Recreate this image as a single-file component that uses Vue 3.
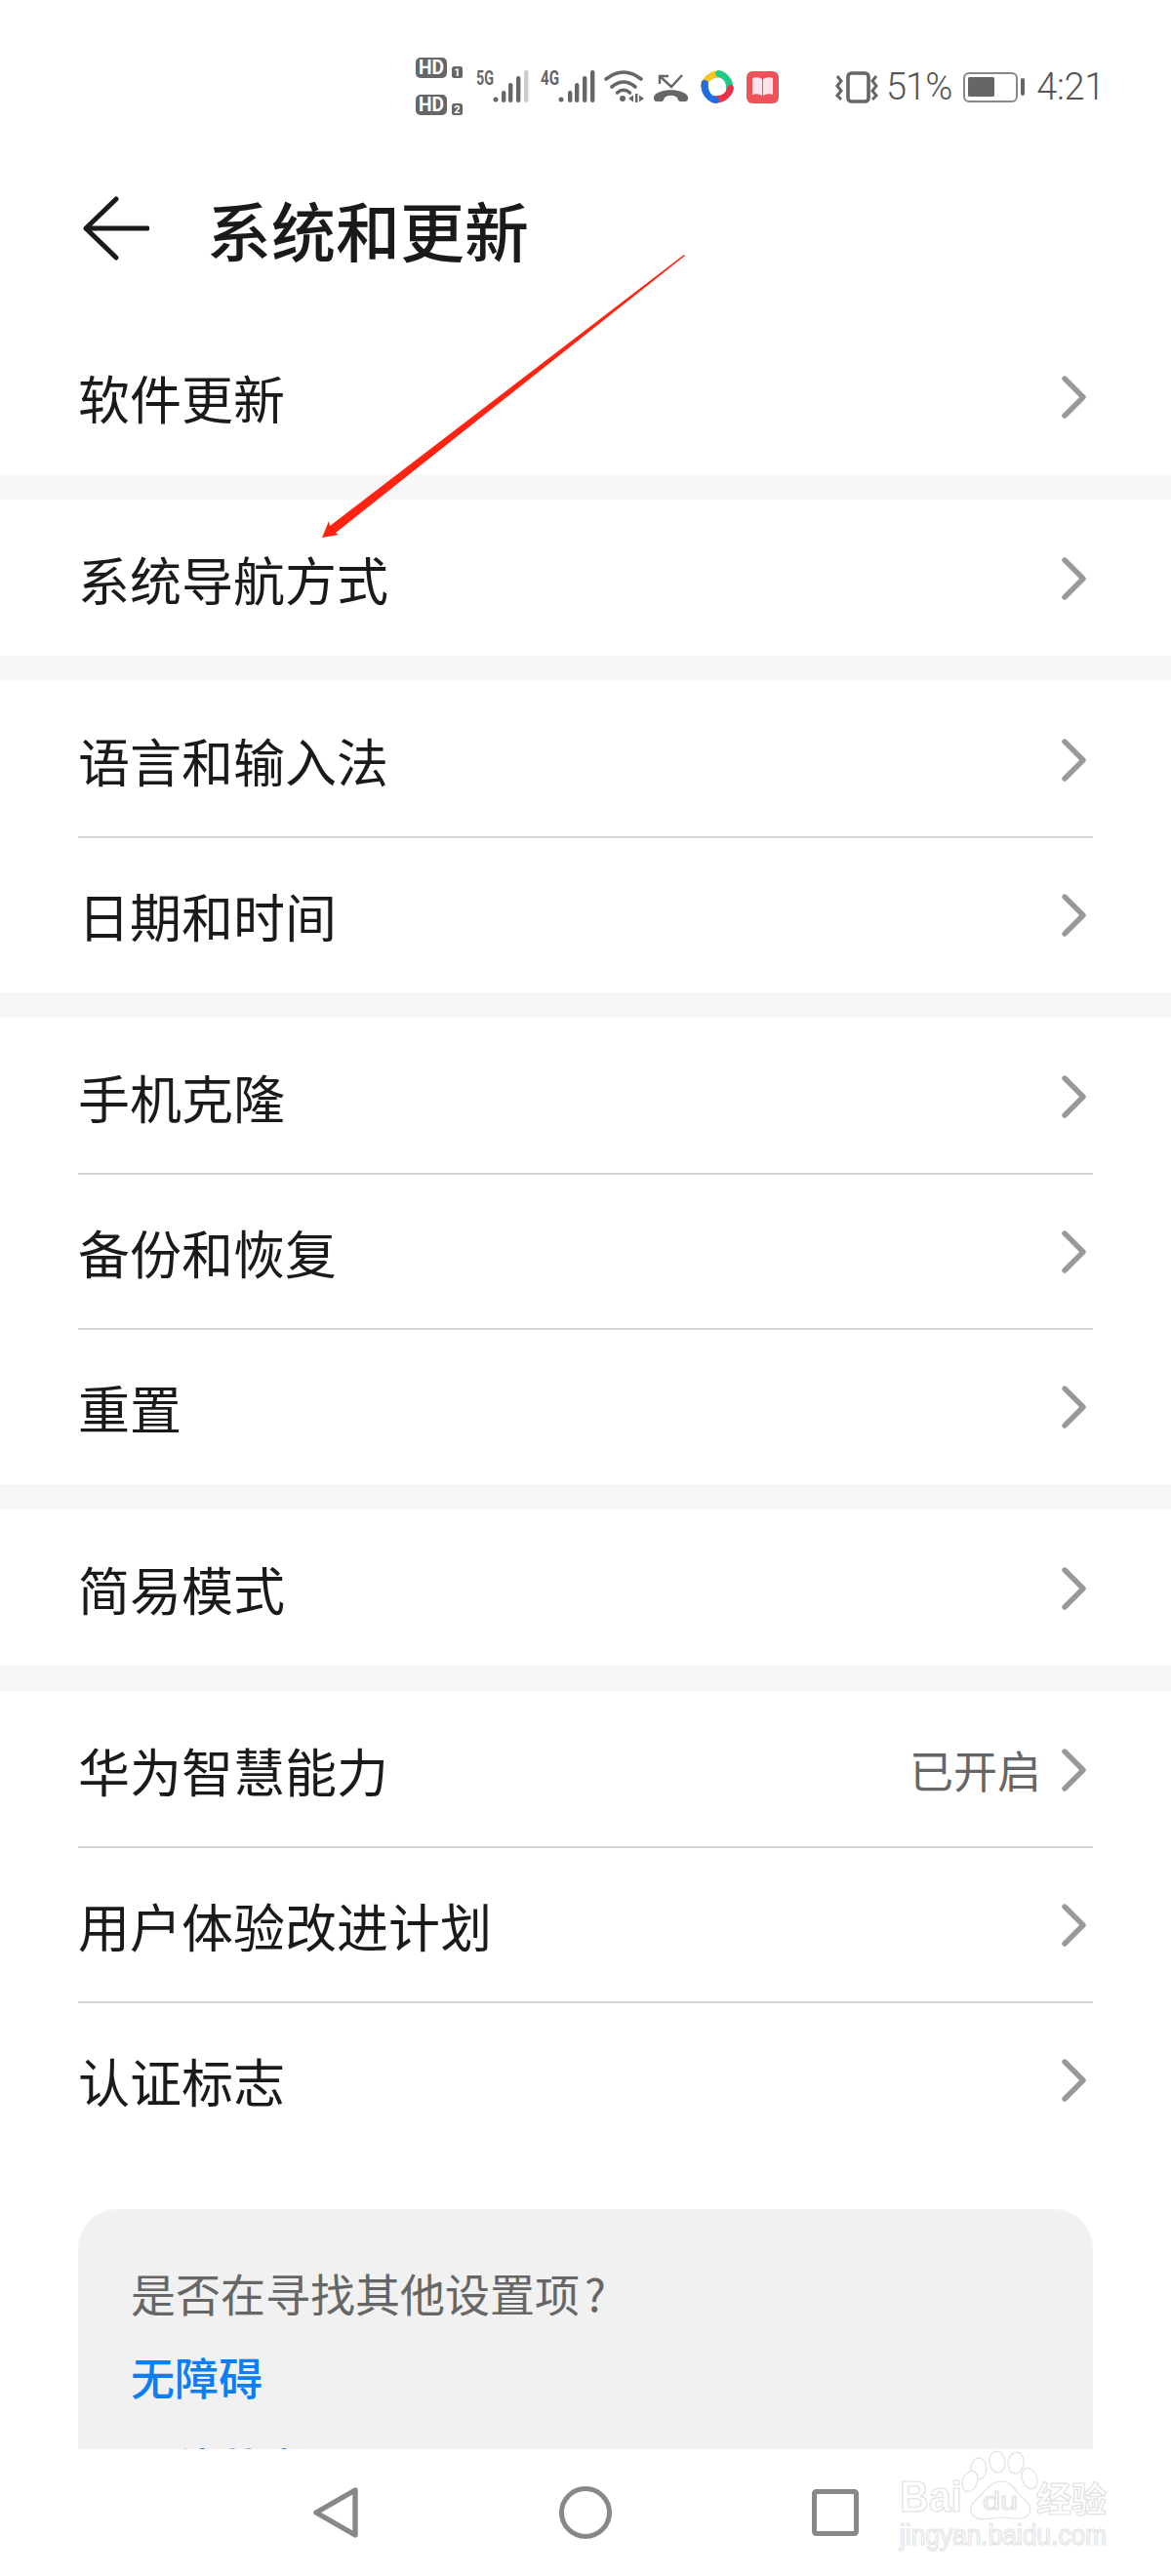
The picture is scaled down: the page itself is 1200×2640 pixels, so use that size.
<script setup>
const groups = [
  [{ label: '软件更新' }],
  [{ label: '系统导航方式' }],
  [{ label: '语言和输入法' }, { label: '日期和时间' }],
  [{ label: '手机克隆' }, { label: '备份和恢复' }, { label: '重置' }],
  [{ label: '简易模式' }],
  [{ label: '华为智慧能力', value: '已开启' }, { label: '用户体验改进计划' }, { label: '认证标志' }],
]

// one swoosh of the round app icon, turned four times
const swoosh = 'M1 17 C2 8 12 -1 24 2 C26 5 25 8 22 9 C15 8 9 11 8 17 C6 21 2 21 1 17 Z'
</script>

<template>
  <div class="page">
    <div class="screen">
      <div class="status">
        <svg class="ic hd" width="48" height="60" viewBox="0 0 48 60">
          <rect x="0" y="0" width="32" height="21" rx="5" fill="#666" />
          <text x="16" y="17" class="hd-t" text-anchor="middle" textLength="26" lengthAdjust="spacingAndGlyphs">HD</text>
          <rect x="37" y="9" width="11" height="12" rx="2.5" fill="#666" />
          <text x="42.5" y="19" class="hd-n" text-anchor="middle">1</text>
          <rect x="0" y="38" width="32" height="21" rx="5" fill="#666" />
          <text x="16" y="55" class="hd-t" text-anchor="middle" textLength="26" lengthAdjust="spacingAndGlyphs">HD</text>
          <rect x="37" y="47" width="11" height="12" rx="2.5" fill="#666" />
          <text x="42.5" y="57" class="hd-n" text-anchor="middle">2</text>
        </svg>
        <svg class="ic sig1" width="54" height="34" viewBox="0 0 54 34">
          <text x="0" y="15" class="net" textLength="18" lengthAdjust="spacingAndGlyphs">5G</text>
          <circle cx="20" cy="30" r="2.5" fill="#666" />
          <rect x="26" y="21" width="4.4" height="12" rx="2.2" fill="#666" />
          <rect x="33" y="13" width="4.4" height="20" rx="2.2" fill="#666" />
          <rect x="41" y="6" width="4.4" height="27" rx="2.2" fill="#666" />
          <rect x="49" y="0" width="4.4" height="33" rx="2.2" fill="#ccc" />
        </svg>
        <svg class="ic sig2" width="56" height="34" viewBox="0 0 56 34">
          <text x="0" y="15" class="net" textLength="19" lengthAdjust="spacingAndGlyphs">4G</text>
          <circle cx="21" cy="30" r="2.5" fill="#666" />
          <rect x="28" y="21" width="4.4" height="12" rx="2.2" fill="#666" />
          <rect x="35" y="13" width="4.4" height="20" rx="2.2" fill="#666" />
          <rect x="43" y="6" width="4.4" height="27" rx="2.2" fill="#666" />
          <rect x="51" y="0" width="4.4" height="33" rx="2.2" fill="#666" />
        </svg>
        <svg class="ic wifi" width="41" height="34" viewBox="0 0 41 34">
          <g fill="none" stroke="#666" stroke-width="3.6" stroke-linecap="round">
            <path d="M2 9 Q20 -5 38 9" />
            <path d="M8 17 Q20 7 32 17" />
            <path d="M13.5 23 Q20 17.5 26.5 23" />
          </g>
          <circle cx="19" cy="29" r="3" fill="#666" />
          <polygon points="25,29 30,25.5 30,32.5" fill="#666" />
          <rect x="32" y="24" width="2.5" height="9" fill="#666" />
          <polygon points="36,25.5 41,29 36,32.5" fill="#666" />
        </svg>
        <svg class="ic call" width="35" height="33" viewBox="0 0 35 33">
          <path d="M6 13 V5 H15 M6 5 L18 16 L29 4" fill="none" stroke="#666" stroke-width="2.4" />
          <path d="M0 26 C4 17 31 17 35 26 L35 28 Q35 31 32 31 L27 31 Q25 31 24 27 C20 24 15 24 11 27 Q10 31 8 31 L3 31 Q0 31 0 28 Z" fill="#666" />
        </svg>
        <svg class="ic app" width="36" height="36" viewBox="0 0 36 36">
          <path :d="swoosh" fill="#f8c51e" />
          <path :d="swoosh" fill="#1ec98a" transform="rotate(90 18 18)" />
          <path :d="swoosh" fill="#ee3148" transform="rotate(180 18 18)" />
          <path :d="swoosh" fill="#1f6fe0" transform="rotate(270 18 18)" />
        </svg>
        <svg class="ic book" width="33" height="33" viewBox="0 0 33 33">
          <rect x="0" y="0" width="33" height="33" rx="6" fill="#ee5358" />
          <path d="M6 7 Q12 5 16 8 L16 25 Q12 22 6 24 Z" fill="#fde4e8" />
          <path d="M27 7 Q21 5 17 8 L17 25 Q21 22 27 24 Z" fill="#fde4e8" />
        </svg>
        <svg class="ic vib" width="43" height="33" viewBox="0 0 43 33">
          <rect x="12" y="2" width="21" height="29" rx="3.5" fill="none" stroke="#666" stroke-width="3.6" />
          <path d="M1 5 L5 10 L1 15 L5 20 L1 25 L5 29" fill="none" stroke="#666" stroke-width="3" />
          <path d="M41 5 L37 10 L41 15 L37 20 L41 25 L37 29" fill="none" stroke="#666" stroke-width="3" />
        </svg>
        <span class="txt pct">51%</span>
        <svg class="ic batt" width="63" height="33" viewBox="0 0 63 33">
          <rect x="1" y="2" width="54" height="29" rx="5" fill="none" stroke="#888" stroke-width="2" />
          <rect x="5" y="6" width="27" height="20" rx="1.5" fill="#666" />
          <rect x="59" y="7" width="4" height="18" rx="2" fill="#666" />
        </svg>
        <span class="txt time">4:21</span>
      </div>

      <div class="header">
        <svg class="back" width="68" height="66" viewBox="0 0 68 66">
          <path d="M34 3 L3 33 L34 63 M3 33 H66" fill="none" stroke="#1a1a1a" stroke-width="5" stroke-linecap="round" stroke-linejoin="round" />
        </svg>
        <h1 class="title">系统和更新</h1>
      </div>

      <div v-for="(group, i) in groups" :key="i" class="group">
        <div v-for="row in group" :key="row.label" class="row">
          <span class="label">{{ row.label }}</span>
          <span v-if="row.value" class="value">{{ row.value }}</span>
          <svg class="chev" width="26" height="44" viewBox="0 0 26 44">
            <path d="M3 3 L22 22 L3 41" fill="none" stroke="#999" stroke-width="5.4" stroke-linecap="round" stroke-linejoin="round" />
          </svg>
        </div>
      </div>

      <div class="card">
        <p class="ask">是否在寻找其他设置项<span class="q">?</span></p>
        <p class="link">无障碍</p>
        <p class="link next">无线共享</p>
      </div>
    </div>

    <div class="nav">
      <svg class="nav-back" width="46" height="52" viewBox="0 0 46 52">
        <path d="M3 26 L43 3 V49 Z" fill="none" stroke="#888" stroke-width="5.4" stroke-linejoin="round" />
      </svg>
      <svg class="nav-home" width="54" height="54" viewBox="0 0 54 54">
        <circle cx="27" cy="27" r="24.5" fill="none" stroke="#888" stroke-width="5" />
      </svg>
      <svg class="nav-recent" width="48" height="48" viewBox="0 0 48 48">
        <rect x="2.5" y="2.5" width="43" height="43" rx="2" fill="none" stroke="#888" stroke-width="5" />
      </svg>
    </div>

    <svg class="pointer" width="380" height="296" viewBox="0 0 380 296">
      <polygon points="0,290 7,273 8,278 371,0 372,1 14,285 17,287" fill="#ff2412" />
    </svg>

    <svg class="mark" width="220" height="120" viewBox="0 0 220 120">
      <g fill="#fff" stroke="#e2e2e2" stroke-width="1.2">
        <text x="2" y="64" class="wm-bai" textLength="64" lengthAdjust="spacingAndGlyphs">Bai</text>
        <ellipse cx="83" cy="20" rx="8" ry="11" />
        <ellipse cx="102" cy="13" rx="8" ry="11" transform="rotate(-8 102 13)" />
        <ellipse cx="121" cy="14" rx="8" ry="11" transform="rotate(8 121 14)" />
        <ellipse cx="135" cy="30" rx="7.5" ry="11" transform="rotate(-20 135 30)" />
        <ellipse cx="74" cy="33" rx="7.5" ry="11" transform="rotate(20 74 33)" />
        <path d="M106 33 C117 33 121 44 128 50 C136 56 138 62 133 68 C126 74 116 70 106 70 C96 70 84 75 77 68 C72 62 75 56 82 50 C90 44 94 33 106 33 Z" />
        <text x="87" y="62" class="wm-du" textLength="36" lengthAdjust="spacingAndGlyphs">du</text>
        <text x="142" y="65" class="wm-cn">经验</text>
        <text x="2" y="98" class="wm-url" textLength="212" lengthAdjust="spacingAndGlyphs">jingyan.baidu.com</text>
      </g>
    </svg>
  </div>
</template>

<style>
html, body {
  margin: 0;
  background: #fff;
}
</style>

<style scoped>
.page {
  position: relative;
  width: 1200px;
  height: 2640px;
  overflow: hidden;
  background: #fff;
  font-family: "Noto Sans CJK SC", "Noto Sans", sans-serif;
}
.screen {
  height: 2510px;
  overflow: hidden;
}
.status {
  display: flex;
  align-items: center;
  height: 148px;
  padding: 30px 72px 0 426px;
  box-sizing: border-box;
}
.ic {
  flex: none;
  display: block;
  overflow: visible;
}
.sig1 { margin-left: 14px; }
.sig2 { margin-left: 12px; }
.wifi { margin-left: 9px; }
.call { margin-left: 10px; }
.app { margin-left: 12px; }
.book { margin-left: 12px; }
.vib { margin-left: 59px; }
.batt { margin-left: 12px; }
.txt {
  font-family: Roboto, sans-serif;
  font-size: 38px;
  font-weight: 300;
  color: #555;
  line-height: 40px;
}
.pct {
  margin-left: 8px;
  width: 68px;
  white-space: nowrap;
  letter-spacing: -1px;
}
.time {
  margin-left: 12px;
  width: 72px;
  white-space: nowrap;
  letter-spacing: -0.4px;
}
.hd-t {
  font-family: Roboto, sans-serif;
  font-size: 20px;
  font-weight: 700;
  fill: #fff;
}
.hd-n {
  font-family: Roboto, sans-serif;
  font-size: 11px;
  font-weight: 700;
  fill: #fff;
}
.net {
  font-family: Roboto, sans-serif;
  font-size: 20px;
  font-weight: 700;
  fill: #666;
}
.header {
  display: flex;
  align-items: center;
  height: 178px;
  padding-left: 85px;
}
.back {
  flex: none;
  margin-top: -6px;
}
.title {
  margin: 0 0 6px 59px;
  font-size: 66px;
  font-weight: 500;
  color: #1a1a1a;
  line-height: 80px;
}
.group {
  padding: 2px 80px 0;
  border-bottom: 26px solid #f7f7f7;
}
.group:nth-last-of-type(2) {
  border-bottom: none;
}
.row {
  display: flex;
  align-items: center;
  height: 159px;
  box-sizing: border-box;
  border-bottom: 2px solid #d4d4d4;
}
.row:last-child {
  height: 158px;
  border-bottom: none;
}
.label {
  flex: 1;
  font-size: 53px;
  line-height: 70px;
  color: #1a1a1a;
}
.value {
  font-size: 45px;
  line-height: 60px;
  color: #666;
  margin-right: 21px;
}
.chev {
  flex: none;
  margin-right: 6px;
}
.card {
  margin: 53px 80px 0;
  height: 300px;
  padding: 52px 54px 0;
  box-sizing: border-box;
  background: #f1f1f1;
  border-radius: 40px;
}
.ask {
  margin: 0;
  font-size: 46px;
  line-height: 66px;
  color: #666;
}
.q {
  margin-left: 5px;
}
.link {
  margin: 21px 0 0;
  font-size: 45px;
  font-weight: 500;
  line-height: 66px;
  color: #0a7ff5;
}
.next {
  margin-top: 27px;
}
.nav {
  display: flex;
  align-items: center;
  height: 130px;
  padding-left: 321px;
  box-sizing: border-box;
}
.nav-home { margin-left: 206px; }
.nav-recent { margin-left: 205px; }
.pointer {
  position: absolute;
  left: 330px;
  top: 261px;
}
.mark {
  position: absolute;
  left: 920px;
  top: 2510px;
}
.wm-bai {
  font-family: "Liberation Sans", sans-serif;
  font-size: 44px;
  font-weight: 700;
}
.wm-du {
  font-family: "Liberation Sans", sans-serif;
  font-size: 26px;
}
.wm-cn {
  font-family: "Noto Sans CJK SC", sans-serif;
  font-size: 36px;
  font-weight: 700;
}
.wm-url {
  font-family: "Liberation Sans", sans-serif;
  font-size: 30px;
}
</style>
